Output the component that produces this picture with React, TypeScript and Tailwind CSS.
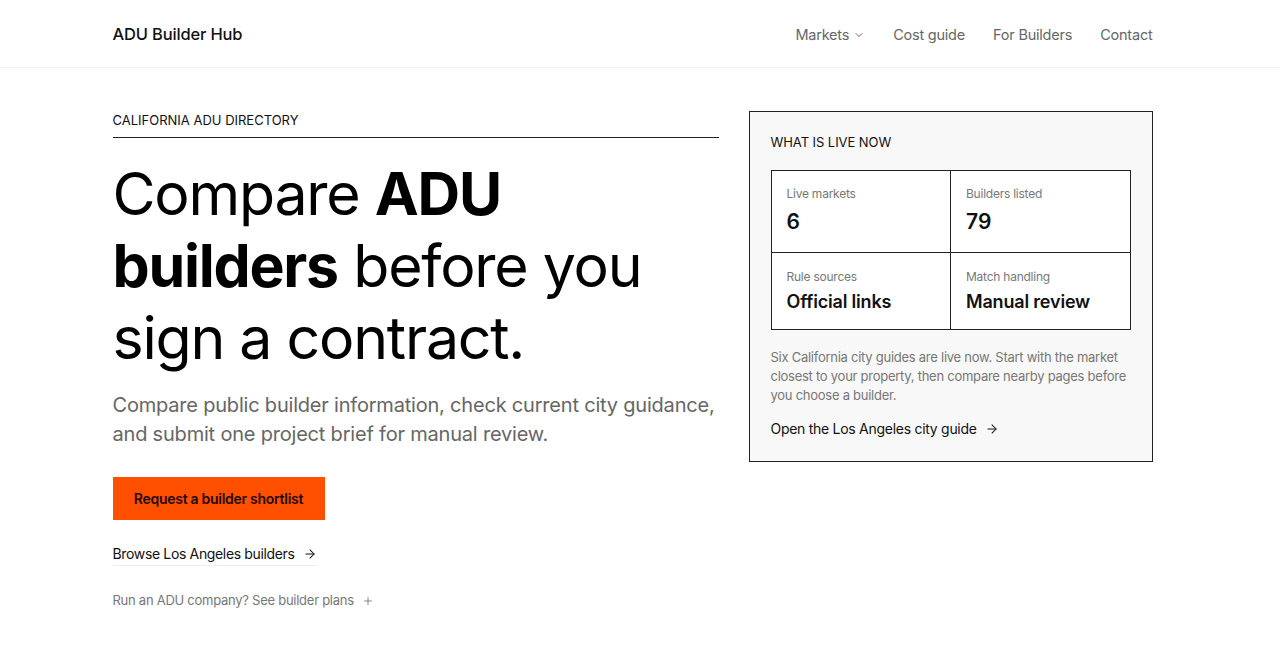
import { ChevronDown, ArrowRight, Plus } from "lucide-react";

const stats = [
  { label: "Live markets", value: "6", big: true },
  { label: "Builders listed", value: "79", big: true },
  { label: "Rule sources", value: "Official links", big: false },
  { label: "Match handling", value: "Manual review", big: false },
];

export default function App() {
  return (
    <div className="min-h-[3700px] pr-[15px] bg-white text-[#111] font-['Inter',sans-serif]">
      <header className="border-b border-[#f0f0f0] -mr-[15px] pr-[15px]">
        <div className="max-w-[1040px] mx-auto h-[67px] pt-[2px] flex items-center justify-between">
          <a className="text-[16.5px] font-medium text-[#111] tracking-[-0.01em]">ADU Builder Hub</a>
          <nav className="flex items-center gap-[28px] text-[14.5px] tracking-[-0.015em] text-[#666]">
            <a className="flex items-center gap-1">
              Markets <ChevronDown className="w-3 h-3" strokeWidth={2} />
            </a>
            <a>Cost guide</a>
            <a>For Builders</a>
            <a>Contact</a>
          </nav>
        </div>
      </header>

      <main className="max-w-[1040px] mx-auto pt-[42px] grid grid-cols-[3fr_2fr] gap-[30px] items-start">
        <section>
          <div className="border-b border-[#222] pb-[7px] text-[13px] text-[#111] leading-5">
            CALIFORNIA ADU DIRECTORY
          </div>
          <h1 className="mt-[20px] text-[59px] leading-[72px] font-normal tracking-[-0.021em] text-black">
            Compare <strong className="font-bold">ADU builders</strong> before you sign a contract.
          </h1>
          <p className="mt-[17px] text-[20px] leading-[29px] tracking-[-0.01em] text-[#666]">
            Compare public builder information, check current city guidance, and submit one project brief for manual review.
          </p>
          <button className="mt-[28px] w-[212px] h-[43px] bg-[#ff4f00] text-[14px] font-semibold tracking-[-0.02em] text-[#1f0a00]">
            Request a builder shortlist
          </button>
          <div className="mt-[21px]">
            <a className="inline-flex items-center gap-2 border-b border-[#eee] pb-[1px] text-[14px] tracking-[-0.025em] text-[#111]">
              Browse Los Angeles builders <ArrowRight className="w-3.5 h-3.5" strokeWidth={1.75} />
            </a>
          </div>
          <div className="mt-[21px]">
            <a className="inline-flex items-center gap-2 text-[13px] tracking-[-0.02em] text-[#777]">
              Run an ADU company? See builder plans <Plus className="w-3 h-3" strokeWidth={1.75} />
            </a>
          </div>
        </section>

        <aside className="mt-[1px] border border-[#222] bg-[#f8f8f8] px-[21px] pt-[20px] pb-[21px]">
          <div className="text-[13px] leading-5 tracking-[-0.005em] text-[#111]">WHAT IS LIVE NOW</div>
          <div className="mt-[18px] grid grid-cols-2 border-t border-l border-[#222] bg-white">
            {stats.map((s) => (
              <div
                key={s.label}
                className={`border-r border-b border-[#222] px-[15px] ${s.big ? "pt-[15px] pb-[16px]" : "pt-[16px] pb-[14px]"}`}
              >
                <div className="text-[12px] leading-4 tracking-[-0.02em] text-[#777]">{s.label}</div>
                <div
                  className={
                    s.big
                      ? "mt-[6px] text-[21px] leading-[28px] font-semibold text-[#111]"
                      : "mt-[4px] text-[18px] leading-[26px] font-semibold tracking-[-0.01em] text-[#111]"
                  }
                >
                  {s.value}
                </div>
              </div>
            ))}
          </div>
          <p className="mt-[18px] text-[13px] leading-[19px] tracking-[-0.02em] text-[#777]">
            Six California city guides are live now. Start with the market closest to your property, then compare nearby pages before you choose a builder.
          </p>
          <a className="mt-[13px] inline-flex items-center gap-2 text-[14px] tracking-[-0.02em] text-[#111]">
            Open the Los Angeles city guide <ArrowRight className="w-3.5 h-3.5" strokeWidth={1.75} />
          </a>
        </aside>
      </main>
    </div>
  );
}
